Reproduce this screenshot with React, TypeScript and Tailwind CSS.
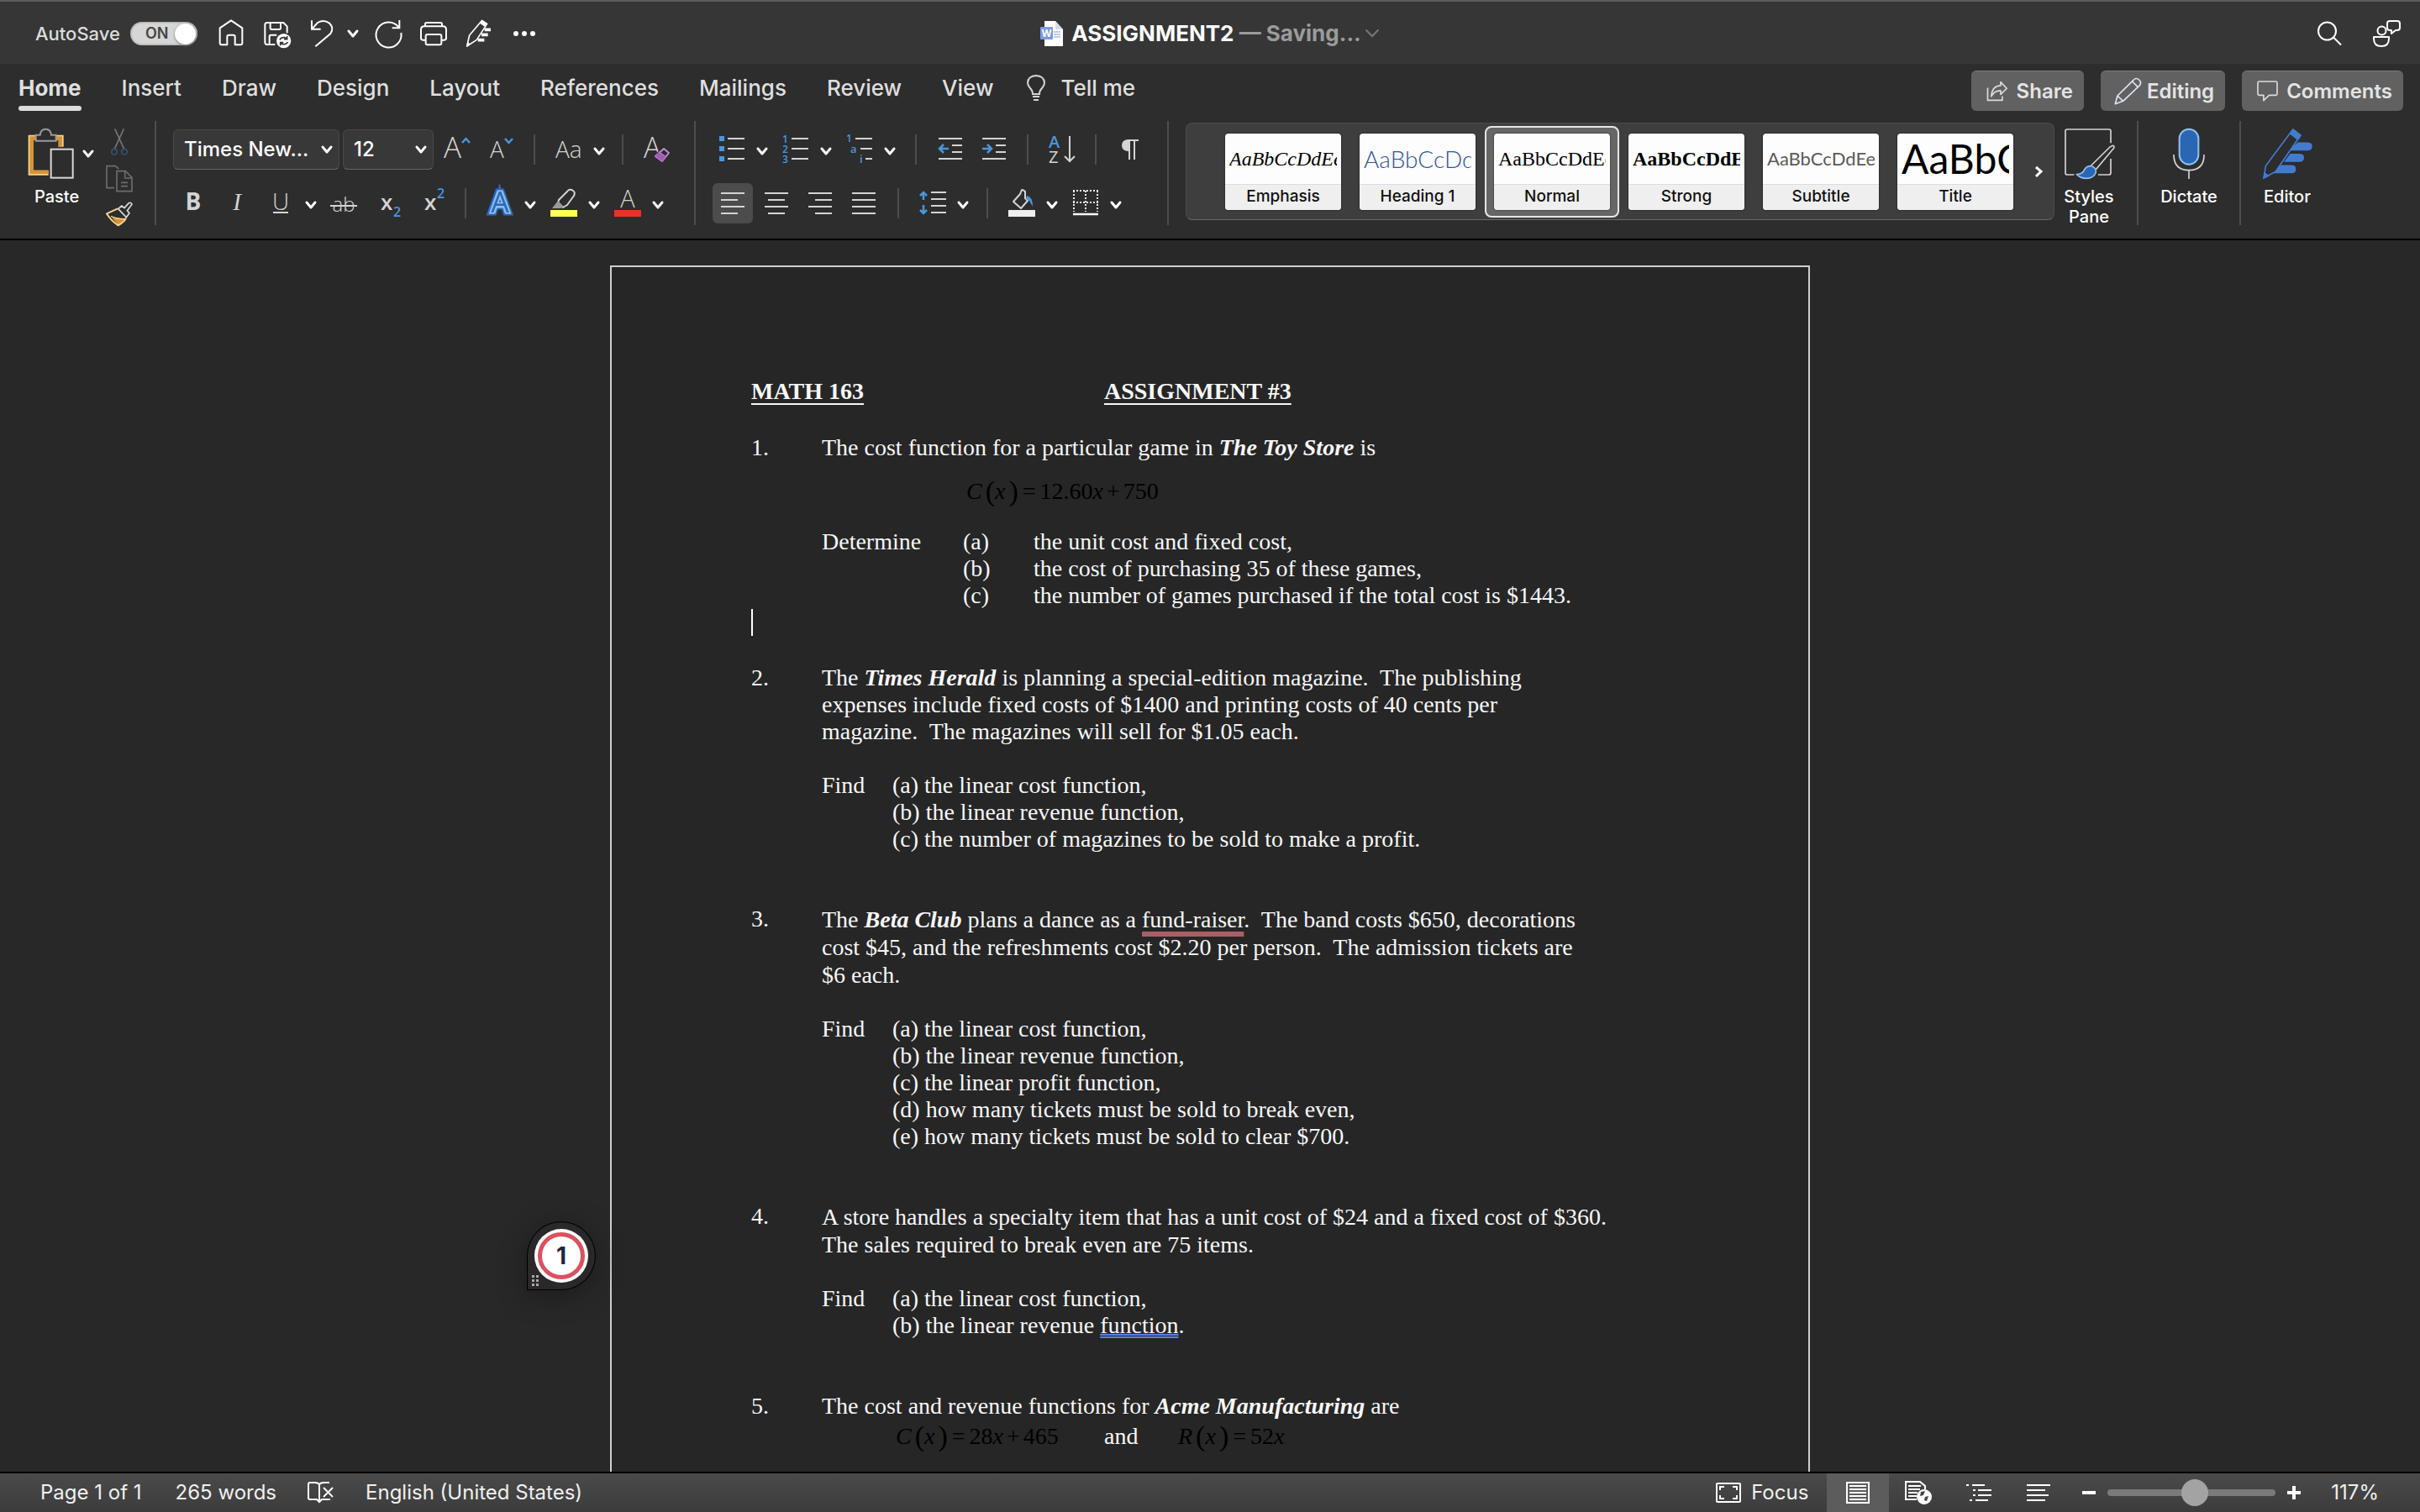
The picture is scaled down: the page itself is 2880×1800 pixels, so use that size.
import React from "react";

type IconProps = { box: string; w: number; h: number; children: React.ReactNode };

function Icon({ box, w, h, children }: IconProps) {
  return (
    <svg
      viewBox={box}
      width={w}
      height={h}
      fill="none"
      stroke="none"
      aria-hidden="true"
      className="block shrink-0 overflow-visible"
    >
      {children}
    </svg>
  );
}

function Chevron({ color = "#ffffff" }: { color?: string }) {
  return (
    <Icon box="0 0 14 10" w={14} h={10}>
      <path d="M2 2 L7 8 L12 2" stroke={color} strokeWidth="3" strokeLinecap="round" strokeLinejoin="round" />
    </Icon>
  );
}

function Tool({ label, children, className = "" }: { label: string; children: React.ReactNode; className?: string }) {
  return (
    <button type="button" aria-label={label} className={`flex w-8 shrink-0 items-center justify-center ${className}`}>
      <Icon box="0 0 32 36" w={32} h={36}>
        {children}
      </Icon>
    </button>
  );
}

function Split({ label, children, className = "" }: { label: string; children: React.ReactNode; className?: string }) {
  return (
    <div className={`flex shrink-0 items-center gap-[13px] ${className}`}>
      <Tool label={label}>{children}</Tool>
      <button type="button" aria-label={`${label} options`} className="shrink-0 pt-[3px]">
        <Chevron />
      </button>
    </div>
  );
}

function Rule({ className = "ml-5 mr-6" }: { className?: string }) {
  return <span className={`h-9 w-[2px] shrink-0 bg-[#4d4d4d] ${className}`} />;
}

function GroupRule({ className = "" }: { className?: string }) {
  return <span className={`w-[2px] shrink-0 self-stretch bg-[#4d4d4d] ${className}`} />;
}

const SANS = "Open Sans, Noto Sans, sans-serif";
const BLUE = "#4a97dd";
const LIGHT = "#d4d4d4";

function Lines({ rows }: { rows: [number, number, number][] }) {
  return (
    <>
      {rows.map(([x1, x2, y]) => (
        <path key={`${x1}-${y}`} d={`M${x1} ${y} H${x2}`} stroke={LIGHT} strokeWidth="2" />
      ))}
    </>
  );
}

function TitleBar() {
  return (
    <header className="grid h-[76px] shrink-0 grid-cols-[1fr_auto_1fr] items-center border-t-2 border-[#5c5c5c] bg-[#363636] pt-[2px]">
      <div className="flex items-center pl-[42px]">
        <label htmlFor="autosave" className="text-[22px] font-medium leading-7 text-[#dcdcdc]">
          AutoSave
        </label>
        <span className="relative ml-3 flex h-7 w-20 items-center rounded-full bg-[#d6d6d6] pl-[18px] shadow-[inset_0_0_3px_#777]">
          <span className="text-[18px] font-semibold leading-7 text-[#444]">ON</span>
          <span className="absolute right-[2px] h-[25px] w-[25px] rounded-full bg-white shadow-[0_1px_3px_#777]" />
          <input id="autosave" type="checkbox" role="switch" defaultChecked className="absolute inset-0 h-full w-full cursor-pointer opacity-0" />
        </span>
        <button type="button" aria-label="Home" className="ml-[25px]">
          <Icon box="357 39 90 102" w={30} h={34}>
            <path
              d="M362 70 L402 43 L442 70 V124 Q442 130 436 130 H416 V101 Q416 95 410 95 H394 Q388 95 388 101 V130 H368 Q362 130 362 124 Z"
              stroke="#fff"
              strokeWidth="6"
              strokeLinejoin="round"
            />
          </Icon>
        </button>
        <button type="button" aria-label="Save" className="ml-6">
          <Icon box="520 39 99 102" w={33} h={34}>
            <path d="M560 129 H532 Q524 129 524 121 V59 Q524 51 532 51 H590 L603 64 V88" stroke="#fff" strokeWidth="6" />
            <path d="M543 51 V70 Q543 75 548 75 H575 Q580 75 580 70 V51" stroke="#fff" strokeWidth="6" />
            <path d="M540 129 V100 Q540 95 545 95 H566" stroke="#fff" strokeWidth="6" />
            <circle cx="591" cy="116" r="26" fill="#fff" />
            <path d="M577 112 Q582 102 594 104 L603 108 M603 99 V110 H592 M605 120 Q600 130 588 128 L579 124 M579 133 V122 H590" stroke="#363636" strokeWidth="5" />
          </Icon>
        </button>
        <button type="button" aria-label="Undo" className="ml-[22px]">
          <Icon box="687 39 84 102" w={28} h={34}>
            <path d="M693 43 V74 H725 M694 73 L714 51 Q736 38 755 52 Q774 70 760 90 L706 136" stroke="#fff" strokeWidth="6" />
          </Icon>
        </button>
        <button type="button" aria-label="Undo history" className="ml-4">
          <Chevron />
        </button>
        <button type="button" aria-label="Redo" className="ml-[18px]">
          <Icon box="914 39 102 102" w={34} h={34}>
            <path d="M1005 42 V70 H979 M1003 68 A45 45 0 1 0 1011 87" stroke="#fff" strokeWidth="6" />
          </Icon>
        </button>
        <button type="button" aria-label="Print" className="ml-5">
          <Icon box="1077 39 102 102" w={34} h={34}>
            <path d="M1098 64 V56 Q1098 51 1103 51 H1153 Q1158 51 1158 56 V64" stroke="#fff" strokeWidth="6" />
            <path d="M1099 113 H1090 Q1083 113 1083 106 V76 Q1083 64 1095 64 H1161 Q1173 64 1173 76 V106 Q1173 113 1166 113 H1157" stroke="#fff" strokeWidth="6" />
            <rect x="1100" y="93" width="56" height="37" rx="6" stroke="#fff" strokeWidth="6" />
          </Icon>
        </button>
        <button type="button" aria-label="Editor" className="ml-[21px]">
          <Icon box="1240 39 93 102" w={31} h={34}>
            <path d="M1299 43 L1317 55 L1280 112 L1245 135 L1254 96 Z" stroke="#fff" strokeWidth="5" strokeLinejoin="round" />
            <path d="M1299 43 L1317 55 L1310 66 L1292 54 Z" fill="#fff" />
            <path d="M1308 76 H1330 M1297 94 H1320 M1284 113 H1307" stroke="#fff" strokeWidth="11" />
            <path d="M1243 137 L1248 120 L1258 128 Z" fill="#fff" />
          </Icon>
        </button>
        <button type="button" aria-label="More commands" className="ml-[26px]">
          <Icon box="0 0 28 34" w={28} h={34}>
            <circle cx="3" cy="17" r="3" fill="#fff" />
            <circle cx="13" cy="17" r="3" fill="#fff" />
            <circle cx="23" cy="17" r="3" fill="#fff" />
          </Icon>
        </button>
      </div>

      <div className="flex items-center">
        <Icon box="0 0 27 30" w={27} h={30}>
          <path d="M5 0 H18 L27 10 V30 H5 Z" fill="#fff" />
          <path d="M18 0 V10 H27 Z" fill="#d8dbe6" />
          <path d="M16 13 H24 M16 16 H24 M16 19 H24" stroke="#7c9bd8" strokeWidth="1" />
          <rect x="0" y="7" width="15" height="15" rx="1" fill="#7c9ade" />
          <text x="7.5" y="19" textAnchor="middle" fontSize="12" fontWeight="700" fontFamily={SANS} fill="#fff">
            W
          </text>
        </Icon>
        <h1 className="ml-[10px] text-[26px] font-bold leading-8 text-white">
          ASSIGNMENT2 <span className="text-[#9b9b9b]">— Saving...</span>
        </h1>
        <button type="button" aria-label="Document details" className="ml-1">
          <Icon box="0 0 18 12" w={18} h={12}>
            <path d="M2 2 L9 9 L16 2" stroke="#777" strokeWidth="2" strokeLinecap="round" />
          </Icon>
        </button>
      </div>

      <div className="flex items-center justify-end gap-9 pr-[23px]">
        <button type="button" aria-label="Search">
          <Icon box="0 0 30 34" w={30} h={34}>
            <circle cx="12.500" cy="14" r="10.500" stroke="#fff" strokeWidth="2" />
            <path d="M20 21.500 L29 30.500" stroke="#fff" strokeWidth="2" />
          </Icon>
        </button>
        <button type="button" aria-label="Account and feedback">
          <Icon box="0 0 34 34" w={34} h={34}>
            <circle cx="11.500" cy="13.500" r="5" stroke="#fff" strokeWidth="2" />
            <path d="M2 21 H20 V23 Q20 32 11 32 Q2 32 2 23 Z" stroke="#fff" strokeWidth="2" strokeLinejoin="round" />
            <path d="M21 2 H30 Q33 2 33 5 V10 Q33 13 30 13 H28 L23 17 V13 H21 Q18 13 18 10 V5 Q18 2 21 2 Z" stroke="#fff" strokeWidth="2" strokeLinejoin="round" />
          </Icon>
        </button>
      </div>
    </header>
  );
}

const TABS = ["Insert", "Draw", "Design", "Layout", "References", "Mailings", "Review", "View"];

function ActionButton({ label, icon, className }: { label: string; icon: React.ReactNode; className: string }) {
  return (
    <button
      type="button"
      className={`flex h-12 items-center rounded-[6px] border-t border-[#7c7c7c] bg-[#616161] text-[24px] font-semibold leading-8 text-[#e4e4e4] ${className}`}
    >
      {icon}
      {label}
    </button>
  );
}

function TabRow() {
  return (
    <nav className="flex h-[68px] shrink-0 items-start justify-between bg-[#2d2d2d] pl-[22px] pr-5 pt-2">
      <div className="flex items-start gap-12 text-[26px] font-medium leading-[42px] text-[#dfdfdf]">
        <button type="button" className="font-bold">
          <span className="block">Home</span>
          <span className="block h-[6px] rounded-full bg-[#dcdcdc]" />
        </button>
        {TABS.map((tab) => (
          <button key={tab} type="button">
            {tab}
          </button>
        ))}
        <button type="button" className="-ml-2 flex items-center gap-[18px]">
          <Icon box="0 0 22 32" w={22} h={32}>
            <path d="M7 23 Q7 19 4 16 Q1 13 1 9.500 Q1.500 1.500 11 1 Q20.500 1.500 21 9.500 Q21 13 18 16 Q15 19 15 23 Z" stroke={LIGHT} strokeWidth="2" />
            <path d="M7 26 H15 M8 30 H14" stroke={LIGHT} strokeWidth="2" />
          </Icon>
          Tell me
        </button>
      </div>
      <div className="flex items-center gap-5">
        <ActionButton
          label="Share"
          className="gap-[10px] pl-[18px] pr-[13px]"
          icon={
            <Icon box="76 78 78 76" w={26} h={25}>
              <path d="M80 104 V149 H133 V134" stroke="#dcdcdc" strokeWidth="5" />
              <path d="M93 135 Q96 97 127 96 V83 L149 106 L127 128 V114 Q104 114 93 135 Z" stroke="#dcdcdc" strokeWidth="5" strokeLinejoin="round" />
            </Icon>
          }
        />
        <ActionButton
          label="Editing"
          className="gap-[6px] pl-4 pr-[13px]"
          icon={
            <Icon box="524 64 99 99" w={33} h={33}>
              <path d="M528 159 L536 130 L592 75 Q602 63 613 73 Q624 84 613 95 L556 149 Z M536 130 L556 149 M589 79 L609 99" stroke="#dfe3f5" strokeWidth="5" strokeLinejoin="round" />
            </Icon>
          }
        />
        <ActionButton
          label="Comments"
          className="gap-[10px] pl-[18px] pr-[13px]"
          icon={
            <Icon box="1036 76 76 76" w={25} h={25}>
              <path d="M1044 79 H1104 Q1109 79 1109 84 V124 Q1109 129 1104 129 H1080 L1060 148 V129 H1044 Q1039 129 1039 124 V84 Q1039 79 1044 79 Z" stroke="#dcdcdc" strokeWidth="5" strokeLinejoin="round" />
            </Icon>
          }
        />
      </div>
    </nav>
  );
}

function ClipboardGroup() {
  return (
    <section aria-label="Clipboard" className="flex pl-[33px] pt-2">
      <div className="flex w-[93px] flex-col">
        <div className="flex items-center gap-[9px]">
          <button type="button" aria-labelledby="paste-label">
            <Icon box="40 40 168 186" w={56} h={62}>
              <path d="M42 66 H168 V108 H150 V84 H60 V192 H114 V210 H42 Z" fill="#f5d78e" />
              <path d="M47 71 H163 V108 H150 V84 H60 V192 H114 V205 H47 Z" fill="#d99238" />
              <path d="M69 87 V66 H84 Q86 45 104 45 Q122 45 124 66 H141 V87 Z" fill="#2d2d2d" stroke="#9a9a9a" strokeWidth="6" />
              <rect x="123" y="117" width="78" height="102" fill="#2d2d2d" stroke="#d8d8d8" strokeWidth="6" />
            </Icon>
          </button>
          <button type="button" aria-label="Paste options">
            <Chevron />
          </button>
        </div>
        <span id="paste-label" className="mt-2 pl-2 text-[20px] font-medium leading-6 text-white">
          Paste
        </span>
      </div>
      <div className="flex flex-col gap-[10px]">
        <button type="button" aria-label="Cut">
          <Icon box="318 28 96 102" w={32} h={34}>
            <path d="M350 32 L383 104 M382 32 L349 104" stroke="#757575" strokeWidth="5" />
            <circle cx="348" cy="114" r="10" stroke="#35546f" strokeWidth="5" />
            <circle cx="384" cy="114" r="10" stroke="#35546f" strokeWidth="5" />
          </Icon>
        </button>
        <button type="button" aria-label="Copy">
          <Icon box="318 160 96 102" w={32} h={34}>
            <path d="M348 243 H321 V165 H352 L364 175" stroke="#6c6c6c" strokeWidth="5" />
            <path d="M357 183 H388 L411 206 V255 H357 Z M386 183 V208 H411 M372 224 H396 M372 237 H396" stroke="#6c6c6c" strokeWidth="5" />
          </Icon>
        </button>
        <button type="button" aria-label="Format painter">
          <Icon box="318 294 96 93" w={32} h={31}>
            <path d="M340 352 L390 354 L362 378 Z" fill="#d99238" />
            <path d="M360 319 L321 337 Q336 362 362 379 Q386 366 390 352" stroke="#f5d78e" strokeWidth="6" strokeLinejoin="round" />
            <path d="M336 346 Q358 356 386 357" stroke="#f5d78e" strokeWidth="4" />
            <path d="M362 320 L375 309 L384 317 L400 299 Q408 295 411 304 L394 326 L402 335 L391 350 Z" stroke="#d8d8d8" strokeWidth="5" strokeLinejoin="round" />
          </Icon>
        </button>
      </div>
    </section>
  );
}

function Combo({ id, label, value, className }: { id: string; label: string; value: string; className: string }) {
  return (
    <div className={`relative flex h-12 shrink-0 items-center ${className}`}>
      <label htmlFor={id} className="sr-only">
        {label}
      </label>
      <select
        id={id}
        className="h-12 w-full appearance-none rounded-[6px] border border-[#484848] border-b-[#666] bg-[#383838] pl-3 text-[24px] font-medium leading-8 text-white"
      >
        <option>{value}</option>
      </select>
      <span className="pointer-events-none absolute right-2">
        <Chevron />
      </span>
    </div>
  );
}

function FontGroup() {
  return (
    <section aria-label="Font" className="flex flex-col gap-4 pl-5 pt-[10px]">
      <div className="flex h-12 items-center">
        <Combo id="font-name" label="Font" value="Times New..." className="w-[198px]" />
        <Combo id="font-size" label="Font size" value="12" className="ml-1 w-[108px]" />
        <Tool label="Grow font" className="ml-3">
          <text x="0" y="28" fontSize="35" fontWeight="300" fontFamily={SANS} fill={LIGHT}>A</text>
          <path d="M22 10 L26.500 5 L31 10" stroke={BLUE} strokeWidth="2.500" />
        </Tool>
        <Tool label="Shrink font" className="ml-[23px]">
          <text x="0" y="28" fontSize="28" fontWeight="300" fontFamily={SANS} fill={LIGHT}>A</text>
          <path d="M18 5 L22.500 10 L27 5" stroke={BLUE} strokeWidth="2.500" />
        </Tool>
        <Rule />
        <Split label="Change case">
          <text x="0" y="28" fontSize="28" fontWeight="300" fontFamily={SANS} fill={LIGHT}>Aa</text>
        </Split>
        <Rule />
        <Tool label="Clear formatting">
          <text x="0" y="28" fontSize="34" fontWeight="300" fontFamily={SANS} fill={LIGHT}>A</text>
          <path d="M23 14 L32 21 L22 34 L12 26 Z" fill="#2d2d2d" />
          <path d="M24 17 L30 22 L22 32 L14 26 Z M18 21 L26 27" stroke="#c888da" strokeWidth="2" strokeLinejoin="round" />
          <path d="M18 21 L26 27 L22 32 L14 26 Z" fill="#a45ab8" />
        </Tool>
      </div>
      <div className="flex h-12 items-center pl-2">
        <Tool label="Bold">
          <text x="16" y="26" textAnchor="middle" fontSize="28" fontWeight="700" fontFamily={SANS} fill={LIGHT}>B</text>
        </Tool>
        <Tool label="Italic" className="ml-5">
          <text x="16" y="26" textAnchor="middle" fontSize="29" fontStyle="italic" fontFamily="Liberation Serif, serif" fill={LIGHT}>I</text>
        </Tool>
        <div className="ml-5">
          <Split label="Underline">
            <text x="16" y="26" textAnchor="middle" fontSize="28" fontWeight="300" fontFamily={SANS} fill={LIGHT}>U</text>
            <path d="M7 29 H25" stroke={LIGHT} strokeWidth="2" />
          </Split>
        </div>
        <Tool label="Strikethrough" className="ml-4">
          <text x="16" y="28" textAnchor="middle" fontSize="24" fontWeight="300" fontFamily={SANS} fill={LIGHT}>ab</text>
          <path d="M0 21 H32" stroke={LIGHT} strokeWidth="2" />
        </Tool>
        <Tool label="Subscript" className="ml-6">
          <text x="4" y="26" fontSize="26" fontWeight="600" fontFamily={SANS} fill={LIGHT}>x</text>
          <text x="19" y="34" fontSize="16" fontWeight="600" fontFamily={SANS} fill={BLUE}>2</text>
        </Tool>
        <Tool label="Superscript" className="ml-5">
          <text x="4" y="26" fontSize="26" fontWeight="600" fontFamily={SANS} fill={LIGHT}>x</text>
          <text x="19" y="12" fontSize="16" fontWeight="600" fontFamily={SANS} fill={BLUE}>2</text>
        </Tool>
        <Rule />
        <Split label="Text effects">
          <text x="16" y="29" textAnchor="middle" fontSize="34" fontWeight="600" fontFamily={SANS} fill="#2b68b8" stroke="#2b68b8" strokeWidth="7">A</text>
          <text x="16" y="29" textAnchor="middle" fontSize="34" fontWeight="600" fontFamily={SANS} fill="#8fc2ef" stroke="#8fc2ef" strokeWidth="3">A</text>
          <text x="16" y="29" textAnchor="middle" fontSize="34" fontWeight="400" fontFamily={SANS} fill="#2b68b8">A</text>
        </Split>
        <Split label="Highlight" className="ml-[17px]">
          <path d="M10 14 L20 4 Q23 0 27 3 Q30 5 28 9 L20 20 L15 23 L9 18 Z" stroke={LIGHT} strokeWidth="2" strokeLinejoin="round" />
          <path d="M9 15 L16 22 L12 24 H2 Z" fill="#9a9a9a" />
          <rect x="0" y="26" width="32" height="8" fill="#ffff54" />
        </Split>
        <Split label="Font color" className="ml-[17px]">
          <text x="16" y="23" textAnchor="middle" fontSize="29" fontWeight="300" fontFamily={SANS} fill={LIGHT}>A</text>
          <rect x="0" y="26" width="32" height="8" fill="#ea3323" />
        </Split>
      </div>
    </section>
  );
}

function AlignButton({ label, on, rows }: { label: string; on?: boolean; rows: [number, number, number][] }) {
  return (
    <button
      type="button"
      aria-label={label}
      aria-pressed={!!on}
      className={`flex h-12 w-12 shrink-0 items-center justify-center rounded-[6px] ${on ? "bg-[#4c4c4c]" : ""}`}
    >
      <Icon box="0 0 28 28" w={28} h={28}>
        <Lines rows={rows} />
      </Icon>
    </button>
  );
}

function ParagraphGroup() {
  return (
    <section aria-label="Paragraph" className="flex flex-col gap-4 pl-5 pt-[10px]">
      <div className="flex h-12 items-center pl-[7px]">
        <Split label="Bullets">
          <path d="M1 2 h6 v6 h-6 Z M1 14 h6 v6 h-6 Z M1 26 h6 v6 h-6 Z" fill={BLUE} />
          <Lines rows={[[11, 31, 5], [11, 31, 17], [11, 31, 29]]} />
        </Split>
        <Split label="Numbering" className="ml-[17px]">
          <text x="0" y="10" fontSize="12" fontWeight="600" fontFamily={SANS} fill={BLUE}>1</text>
          <text x="0" y="22" fontSize="12" fontWeight="600" fontFamily={SANS} fill={BLUE}>2</text>
          <text x="0" y="34" fontSize="12" fontWeight="600" fontFamily={SANS} fill={BLUE}>3</text>
          <Lines rows={[[11, 31, 5], [11, 31, 17], [11, 31, 29]]} />
        </Split>
        <Split label="Multilevel list" className="ml-[17px]">
          <text x="0" y="9" fontSize="12" fontWeight="600" fontFamily={SANS} fill={BLUE}>1</text>
          <text x="5" y="22" fontSize="13" fontWeight="600" fontFamily={SANS} fill={BLUE}>a</text>
          <text x="16" y="34" fontSize="13" fontWeight="600" fontFamily={SANS} fill={BLUE}>i</text>
          <Lines rows={[[11, 31, 5], [17, 31, 17], [23, 31, 29]]} />
        </Split>
        <Rule className="ml-[23px] mr-6" />
        <Tool label="Decrease indent">
          <Lines rows={[[2, 30, 5], [18, 30, 13], [18, 30, 21], [2, 30, 29]]} />
          <path d="M14 17 H3 M8 12 L3 17 L8 22" stroke={BLUE} strokeWidth="2.500" />
        </Tool>
        <Tool label="Increase indent" className="ml-5">
          <Lines rows={[[2, 30, 5], [18, 30, 13], [18, 30, 21], [2, 30, 29]]} />
          <path d="M2 17 H13 M8 12 L13 17 L8 22" stroke={BLUE} strokeWidth="2.500" />
        </Tool>
        <Rule className="ml-[23px] mr-6" />
        <Tool label="Sort">
          <text x="0" y="16" fontSize="20" fontWeight="600" fontFamily={SANS} fill={BLUE}>A</text>
          <text x="0" y="34" fontSize="20" fontWeight="400" fontFamily={SANS} fill={LIGHT}>Z</text>
          <path d="M25 2 V32 M19 26 L25 32 L31 26" stroke={LIGHT} strokeWidth="2" />
        </Tool>
        <Rule className="ml-[23px] mr-6" />
        <Tool label="Show paragraph marks">
          <path d="M26 6 H13 Q6 7 6 13 Q6 19 13 20 H14 V30 H16 V8 H20 V30 H22 V8 H26 Z" fill={LIGHT} />
        </Tool>
      </div>
      <div className="flex h-12 items-center gap-1">
        <AlignButton label="Align left" on rows={[[0, 28, 2], [0, 20, 10], [0, 28, 18], [0, 20, 26]]} />
        <AlignButton label="Center" rows={[[0, 28, 2], [4, 24, 10], [0, 28, 18], [4, 24, 26]]} />
        <AlignButton label="Align right" rows={[[0, 28, 2], [8, 28, 10], [0, 28, 18], [8, 28, 26]]} />
        <AlignButton label="Justify" rows={[[0, 28, 2], [0, 28, 10], [0, 28, 18], [0, 28, 26]]} />
        <Rule className="ml-3 mr-5" />
        <Split label="Line spacing">
          <path d="M5 5 V14 M1 9 L5 5 L9 9 M5 20 V30 M1 26 L5 30 L9 26" stroke={BLUE} strokeWidth="2.500" />
          <Lines rows={[[14, 32, 5], [14, 32, 13], [14, 32, 21], [14, 32, 29]]} />
        </Split>
        <Rule className="ml-[17px] mr-5" />
        <Split label="Shading">
          <path d="M15 24 L6 16 L14 7 L16 2 Q18 2 20 4 V12 L23 15 Z" stroke={LIGHT} strokeWidth="2" strokeLinejoin="round" />
          <path d="M22 9 Q29 10 29 22 L25 15 L21 13 Z" fill={BLUE} />
          <rect x="0" y="26" width="32" height="8" fill="#eeeeee" />
        </Split>
        <Split label="Borders" className="ml-[13px]">
          <path d="M1 3 H31 M1 17 H31" stroke="#eee" strokeWidth="2" strokeDasharray="2 2" />
          <path d="M2 3 V28 M16 3 V28 M30 3 V28" stroke="#eee" strokeWidth="2" strokeDasharray="2 2" />
          <path d="M1 31 H31" stroke="#fff" strokeWidth="2.500" />
        </Split>
      </div>
    </section>
  );
}

const STYLES = [
  { name: "Emphasis", sample: "AaBbCcDdEe", type: "font-['Liberation_Serif',serif] italic text-[24px] text-black" },
  { name: "Heading 1", sample: "AaBbCcDd", type: "font-[Lato,sans-serif] font-light text-[28px] text-[#2f5496]" },
  { name: "Normal", sample: "AaBbCcDdEe", type: "font-['Liberation_Serif',serif] text-[24px] text-black", on: true },
  { name: "Strong", sample: "AaBbCcDdEe", type: "font-['Liberation_Serif',serif] font-bold text-[24px] text-black" },
  { name: "Subtitle", sample: "AaBbCcDdEe", type: "font-[Lato,sans-serif] text-[22px] text-[#5a5a5a]" },
  { name: "Title", sample: "AaBbCc", type: "font-[Lato,sans-serif] text-[48px] text-black" },
];

function StyleGallery() {
  return (
    <section
      aria-label="Styles"
      className="ml-5 mt-[2px] flex h-[116px] min-w-0 flex-1 items-center rounded-[8px] border border-[#4c4c4c] border-b-[#6a6a6a] bg-[#3e3e3e] pl-[35px]"
    >
      {STYLES.map((s) => (
        <button
          key={s.name}
          type="button"
          aria-pressed={!!s.on}
          className={`w-40 shrink-0 rounded-[8px] border-2 px-[9px] py-[7px] ${s.on ? "border-[#e6e6e6] bg-[#666]" : "border-transparent"}`}
        >
          <span className="flex flex-col overflow-hidden rounded-[4px] bg-[#fdfdfd] shadow-[0_0_2px_#111]">
            <span className={`mx-[5px] flex h-[60px] items-center overflow-hidden whitespace-nowrap leading-[60px] ${s.type}`}>{s.sample}</span>
            <span className="h-[31px] border-t border-[#ddd] bg-[#efefef] text-center text-[19px] font-medium leading-7 text-[#111]">{s.name}</span>
          </span>
        </button>
      ))}
      <button type="button" aria-label="More styles" className="ml-[14px]">
        <Icon box="0 0 12 16" w={12} h={16}>
          <path d="M2 3 L8 8 L2 14" stroke="#fff" strokeWidth="3" />
        </Icon>
      </button>
    </section>
  );
}

function BigButton({ label, icon, className }: { label: string; icon: React.ReactNode; className: string }) {
  return (
    <button type="button" className={`flex shrink-0 flex-col items-center pt-2 text-[20px] font-medium leading-6 text-white ${className}`}>
      {icon}
      <span className="mt-2">{label}</span>
    </button>
  );
}

function Ribbon() {
  return (
    <div className="flex h-[142px] shrink-0 border-b-2 border-black bg-[#2d2d2d] pb-4">
      <ClipboardGroup />
      <GroupRule className="ml-[26px]" />
      <FontGroup />
      <GroupRule className="ml-7" />
      <ParagraphGroup />
      <GroupRule className="ml-7" />
      <StyleGallery />
      <BigButton
        label="Styles Pane"
        className="ml-[6px] w-[70px]"
        icon={
          <Icon box="345 249 192 186" w={64} h={62}>
            <path d="M519 304 V261 Q519 255 513 255 H363 Q357 255 357 261 V411 Q357 417 363 417 H388 M474 417 H513 Q519 417 519 411 V360" stroke={LIGHT} strokeWidth="5" />
            <path d="M449 384 L516 318 Q534 307 530 322 L466 398" stroke={LIGHT} strokeWidth="5" strokeLinejoin="round" />
            <path d="M398 416 Q420 414 424 400 Q432 385 450 386 Q468 392 466 408 Q458 430 432 430 Q410 430 398 416 Z" fill="#2b66b4" stroke="#8fc2ef" strokeWidth="5" />
          </Icon>
        }
      />
      <GroupRule className="ml-[22px]" />
      <BigButton
        label="Dictate"
        className="w-[120px]"
        icon={
          <Icon box="732 243 120 186" w={40} h={62}>
            <rect x="758" y="248" width="68" height="126" rx="34" fill="#2b66b4" stroke="#8fc2ef" strokeWidth="6" />
            <path d="M738 339 Q738 395 792 395 Q846 395 846 339 M792 395 V426" stroke={LIGHT} strokeWidth="5" />
          </Icon>
        }
      />
      <GroupRule />
      <BigButton
        label="Editor"
        className="mr-[103px] w-[110px]"
        icon={
          <Icon box="1054 240 186 192" w={62} h={62}>
            <path d="M1186 294 H1224 Q1239 295 1239 309 Q1239 323 1224 324 H1150 Z M1158 336 H1194 Q1209 337 1209 351 Q1209 365 1194 366 H1135 Z M1124 378 H1164 Q1179 379 1179 393 Q1179 407 1164 408 H1095 Z" fill="#437bd0" />
            <path d="M1168 246 L1196 268 L1104 402 L1060 426 L1068 380 Z" fill="#2d2d2d" stroke="#437bd0" strokeWidth="5" strokeLinejoin="round" />
            <path d="M1168 244 L1200 268 L1187 287 L1156 263 Z" fill="#437bd0" />
            <path d="M1057 430 L1063 404 L1082 418 Z" fill="#437bd0" />
          </Icon>
        }
      />
    </div>
  );
}

function Call({ name }: { name: string }) {
  return (
    <span className="flex items-center">
      <i>{name}</i>
      <span className="ml-1 text-[34px]">(</span>
      <i>x</i>
      <span className="ml-1 text-[34px]">)</span>
      <span className="mx-[5px]">=</span>
    </span>
  );
}

function Parts({ items, className = "" }: { items: React.ReactNode[]; className?: string }) {
  return (
    <ul className={className}>
      {items.map((item, i) => (
        <li key={i}>{item}</li>
      ))}
    </ul>
  );
}

function Find({ items }: { items: React.ReactNode[] }) {
  return (
    <div className="mt-8 flex">
      <span className="w-[84px]">Find</span>
      <Parts items={items} />
    </div>
  );
}

function Question({ n, className, children }: { n: number; className: string; children: React.ReactNode }) {
  return (
    <section className={`flex ${className}`}>
      <span className="w-[84px] shrink-0">{n}.</span>
      <div className="min-w-0 flex-1 whitespace-nowrap">{children}</div>
    </section>
  );
}

function Page() {
  return (
    <article className="w-[1428px] shrink-0 border-2 border-b-0 border-[#cfcfcf] bg-[#262626] px-[166px] pt-[132px] font-['Liberation_Serif',serif] text-[28px] leading-8 text-[#f7f7f7]">
      <h2 className="flex font-bold">
        <span className="w-[420px]">
          <span className="underline decoration-2 underline-offset-[5px]">MATH 163</span>
        </span>
        <span className="underline decoration-2 underline-offset-[5px]">ASSIGNMENT #3</span>
      </h2>

      <Question n={1} className="mt-[35px]">
        <p>
          The cost function for a particular game in <b><i>The Toy Store</i></b> is
        </p>
        <div className="flex h-20 items-start pl-[172px] pt-5 text-black">
          <span className="flex items-center">
            <Call name="C" />
            12.60<i>x</i>
            <span className="mx-1">+</span>750
          </span>
        </div>
        <div className="flex">
          <span className="w-[168px]">Determine</span>
          <Parts className="w-[84px]" items={["(a)", "(b)", "(c)"]} />
          <Parts
            items={[
              "the unit cost and fixed cost,",
              "the cost of purchasing 35 of these games,",
              "the number of games purchased if the total cost is $1443.",
            ]}
          />
        </div>
      </Question>

      <div className="h-[66px]">
        <span className="block h-8 w-[2px] bg-white" />
      </div>

      <Question n={2} className="">
        <p>
          The <b><i>Times Herald</i></b> is planning a special-edition magazine.&nbsp; The publishing
          <br />
          expenses include fixed costs of $1400 and printing costs of 40 cents per
          <br />
          magazine.&nbsp; The magazines will sell for $1.05 each.
        </p>
        <Find
          items={[
            "(a) the linear cost function,",
            "(b) the linear revenue function,",
            "(c) the number of magazines to be sold to make a profit.",
          ]}
        />
      </Question>

      <Question n={3} className="mt-[63px]">
        <p className="leading-[33px]">
          The <b><i>Beta Club</i></b> plans a dance as a{" "}
          <span className="underline decoration-[#a95f66] decoration-[6px] underline-offset-[5px]">fund-raiser</span>.&nbsp; The band costs $650, decorations
          <br />
          cost $45, and the refreshments cost $2.20 per person.&nbsp; The admission tickets are
          <br />
          $6 each.
        </p>
        <Find
          items={[
            "(a) the linear cost function,",
            "(b) the linear revenue function,",
            "(c) the linear profit function,",
            "(d) how many tickets must be sold to break even,",
            "(e) how many tickets must be sold to clear $700.",
          ]}
        />
      </Question>

      <Question n={4} className="mt-[63px]">
        <p className="leading-[33px]">
          A store handles a specialty item that has a unit cost of $24 and a fixed cost of $360.
          <br />
          The sales required to break even are 75 items.
        </p>
        <Find
          items={[
            "(a) the linear cost function,",
            <>
              (b) the linear revenue{" "}
              <span className="underline decoration-[#5b80e6] decoration-double decoration-2 underline-offset-1 [text-decoration-skip-ink:none]">function</span>.
            </>,
          ]}
        />
      </Question>

      <Question n={5} className="mt-16">
        <p>
          The cost and revenue functions for <b><i>Acme Manufacturing</i></b> are
        </p>
        <div className="mt-1 flex items-center">
          <span className="flex w-[336px] items-center pl-[88px] text-black">
            <Call name="C" />
            28<i>x</i>
            <span className="mx-1">+</span>465
          </span>
          <span className="w-[88px]">and</span>
          <span className="flex items-center text-black">
            <Call name="R" />
            52<i>x</i>
          </span>
        </div>
      </Question>
    </article>
  );
}

function StepBadge() {
  return (
    <div className="absolute right-full top-[1138px] mr-[17px] flex h-[82px] w-[82px] items-center justify-center rounded-full rounded-bl-[10px] border border-black bg-[#2a2829] shadow-[0_6px_30px_#1c1c1c]">
      <div className="flex h-16 w-16 items-center justify-center rounded-full bg-white">
        <div className="flex h-14 w-14 items-center justify-center rounded-full border-[5px] border-[#dc5060] text-[28px] font-bold leading-8 text-[#1f2544]">1</div>
      </div>
      <span className="absolute bottom-1 left-1">
        <Icon box="0 0 10 14" w={10} h={14}>
          <path d="M1 1 h3 v3 h-3 Z M6 1 h3 v3 h-3 Z M1 6 h3 v3 h-3 Z M6 6 h3 v3 h-3 Z M1 11 h3 v3 h-3 Z M6 11 h3 v3 h-3 Z" fill="#a8a8a8" />
        </Icon>
      </span>
    </div>
  );
}

function StatusBar() {
  return (
    <footer className="flex h-12 shrink-0 items-center justify-between border-t-2 border-black bg-gradient-to-b from-[#4a4a4a] to-[#3c3c3c] pl-12 text-[24px] leading-7 text-[#f0f0f0]">
      <div className="flex items-center">
        <button type="button">Page 1 of 1</button>
        <button type="button" className="ml-10">265 words</button>
        <button type="button" aria-label="Proofing" className="ml-9">
          <Icon box="0 0 34 28" w={34} h={28}>
            <path d="M15 3 V25 M15 4 Q13 2 10 2 H4 Q2 2 2 4 V20 Q2 22 4 22 H12 L15 25 L18 22 H28 M15 4 Q17 2 20 2 H27" stroke="#fff" strokeWidth="2" />
            <path d="M20 8 L31 19 M31 8 L20 19" stroke="#fff" strokeWidth="2" />
          </Icon>
        </button>
        <button type="button" className="ml-9">English (United States)</button>
      </div>
      <div className="flex h-full items-center pr-[49px]">
        <button type="button" className="flex items-center gap-3">
          <Icon box="0 0 30 24" w={30} h={24}>
            <rect x="1" y="1" width="28" height="22" rx="1" stroke="#fff" strokeWidth="2" />
            <path d="M5 9 V5 H10 M20 5 H25 V9 M25 15 V19 H20 M10 19 H5 V15" stroke="#fff" strokeWidth="2" />
          </Icon>
          Focus
        </button>
        <button type="button" aria-label="Print layout" className="ml-[22px] flex h-full w-[74px] items-center justify-center bg-[#5c5c5c]">
          <Icon box="0 0 28 28" w={28} h={28}>
            <rect x="1" y="2" width="26" height="24" stroke="#fff" strokeWidth="2" />
            <path d="M4 6 H24 M4 10 H24 M4 14 H24 M4 18 H24 M4 22 H24" stroke="#fff" strokeWidth="2" />
          </Icon>
        </button>
        <button type="button" aria-label="Web layout" className="ml-[19px]">
          <Icon box="0 0 34 30" w={34} h={30}>
            <path d="M14 23 H1 V2 H18 L24 7 V11" stroke="#fff" strokeWidth="2" />
            <path d="M4 7 H19 M4 11 H18 M4 15 H15 M4 19 H14" stroke="#fff" strokeWidth="2" />
            <circle cx="23" cy="20" r="9" fill="#fff" />
            <path d="M19 14 L24 13 L22 18 L18 19 Z M24 20 L28 19 L26 25 L23 24 Z" fill="#444" />
          </Icon>
        </button>
        <button type="button" aria-label="Outline" className="ml-[39px]">
          <Icon box="0 0 30 22" w={30} h={22}>
            <path d="M0 2 H3 M7 2 H22 M8 8 H11 M14 8 H30 M8 14 H11 M14 14 H30 M4 20 H7 M11 20 H26" stroke="#fff" strokeWidth="2" />
          </Icon>
        </button>
        <button type="button" aria-label="Draft" className="ml-[42px]">
          <Icon box="0 0 28 22" w={28} h={22}>
            <path d="M0 2 H28 M0 8 H22 M0 14 H26 M0 20 H22" stroke="#fff" strokeWidth="2" />
          </Icon>
        </button>
        <button type="button" aria-label="Zoom out" className="ml-[38px]">
          <Icon box="0 0 16 16" w={16} h={16}>
            <path d="M0 8 H16" stroke="#fff" strokeWidth="4" />
          </Icon>
        </button>
        <input
          type="range"
          aria-label="Zoom"
          min={0}
          max={100}
          defaultValue={52}
          className="ml-[14px] h-2 w-[200px] appearance-none rounded-full bg-[#7a7a7a] [&::-webkit-slider-thumb]:h-8 [&::-webkit-slider-thumb]:w-8 [&::-webkit-slider-thumb]:appearance-none [&::-webkit-slider-thumb]:rounded-full [&::-webkit-slider-thumb]:bg-[#a3a3a3]"
        />
        <button type="button" aria-label="Zoom in" className="ml-[14px]">
          <Icon box="0 0 16 16" w={16} h={16}>
            <path d="M0 8 H16 M8 0 V16" stroke="#fff" strokeWidth="4" />
          </Icon>
        </button>
        <button type="button" className="ml-9">117%</button>
      </div>
    </footer>
  );
}

export default function App() {
  return (
    <div className="flex h-screen flex-col overflow-hidden bg-[#282828] font-[Inter,'Liberation_Sans',sans-serif]">
      <TitleBar />
      <TabRow />
      <Ribbon />
      <main className="flex min-h-0 flex-1 justify-center overflow-hidden pt-[30px]">
        <div className="relative flex">
          <StepBadge />
          <Page />
        </div>
      </main>
      <StatusBar />
    </div>
  );
}
